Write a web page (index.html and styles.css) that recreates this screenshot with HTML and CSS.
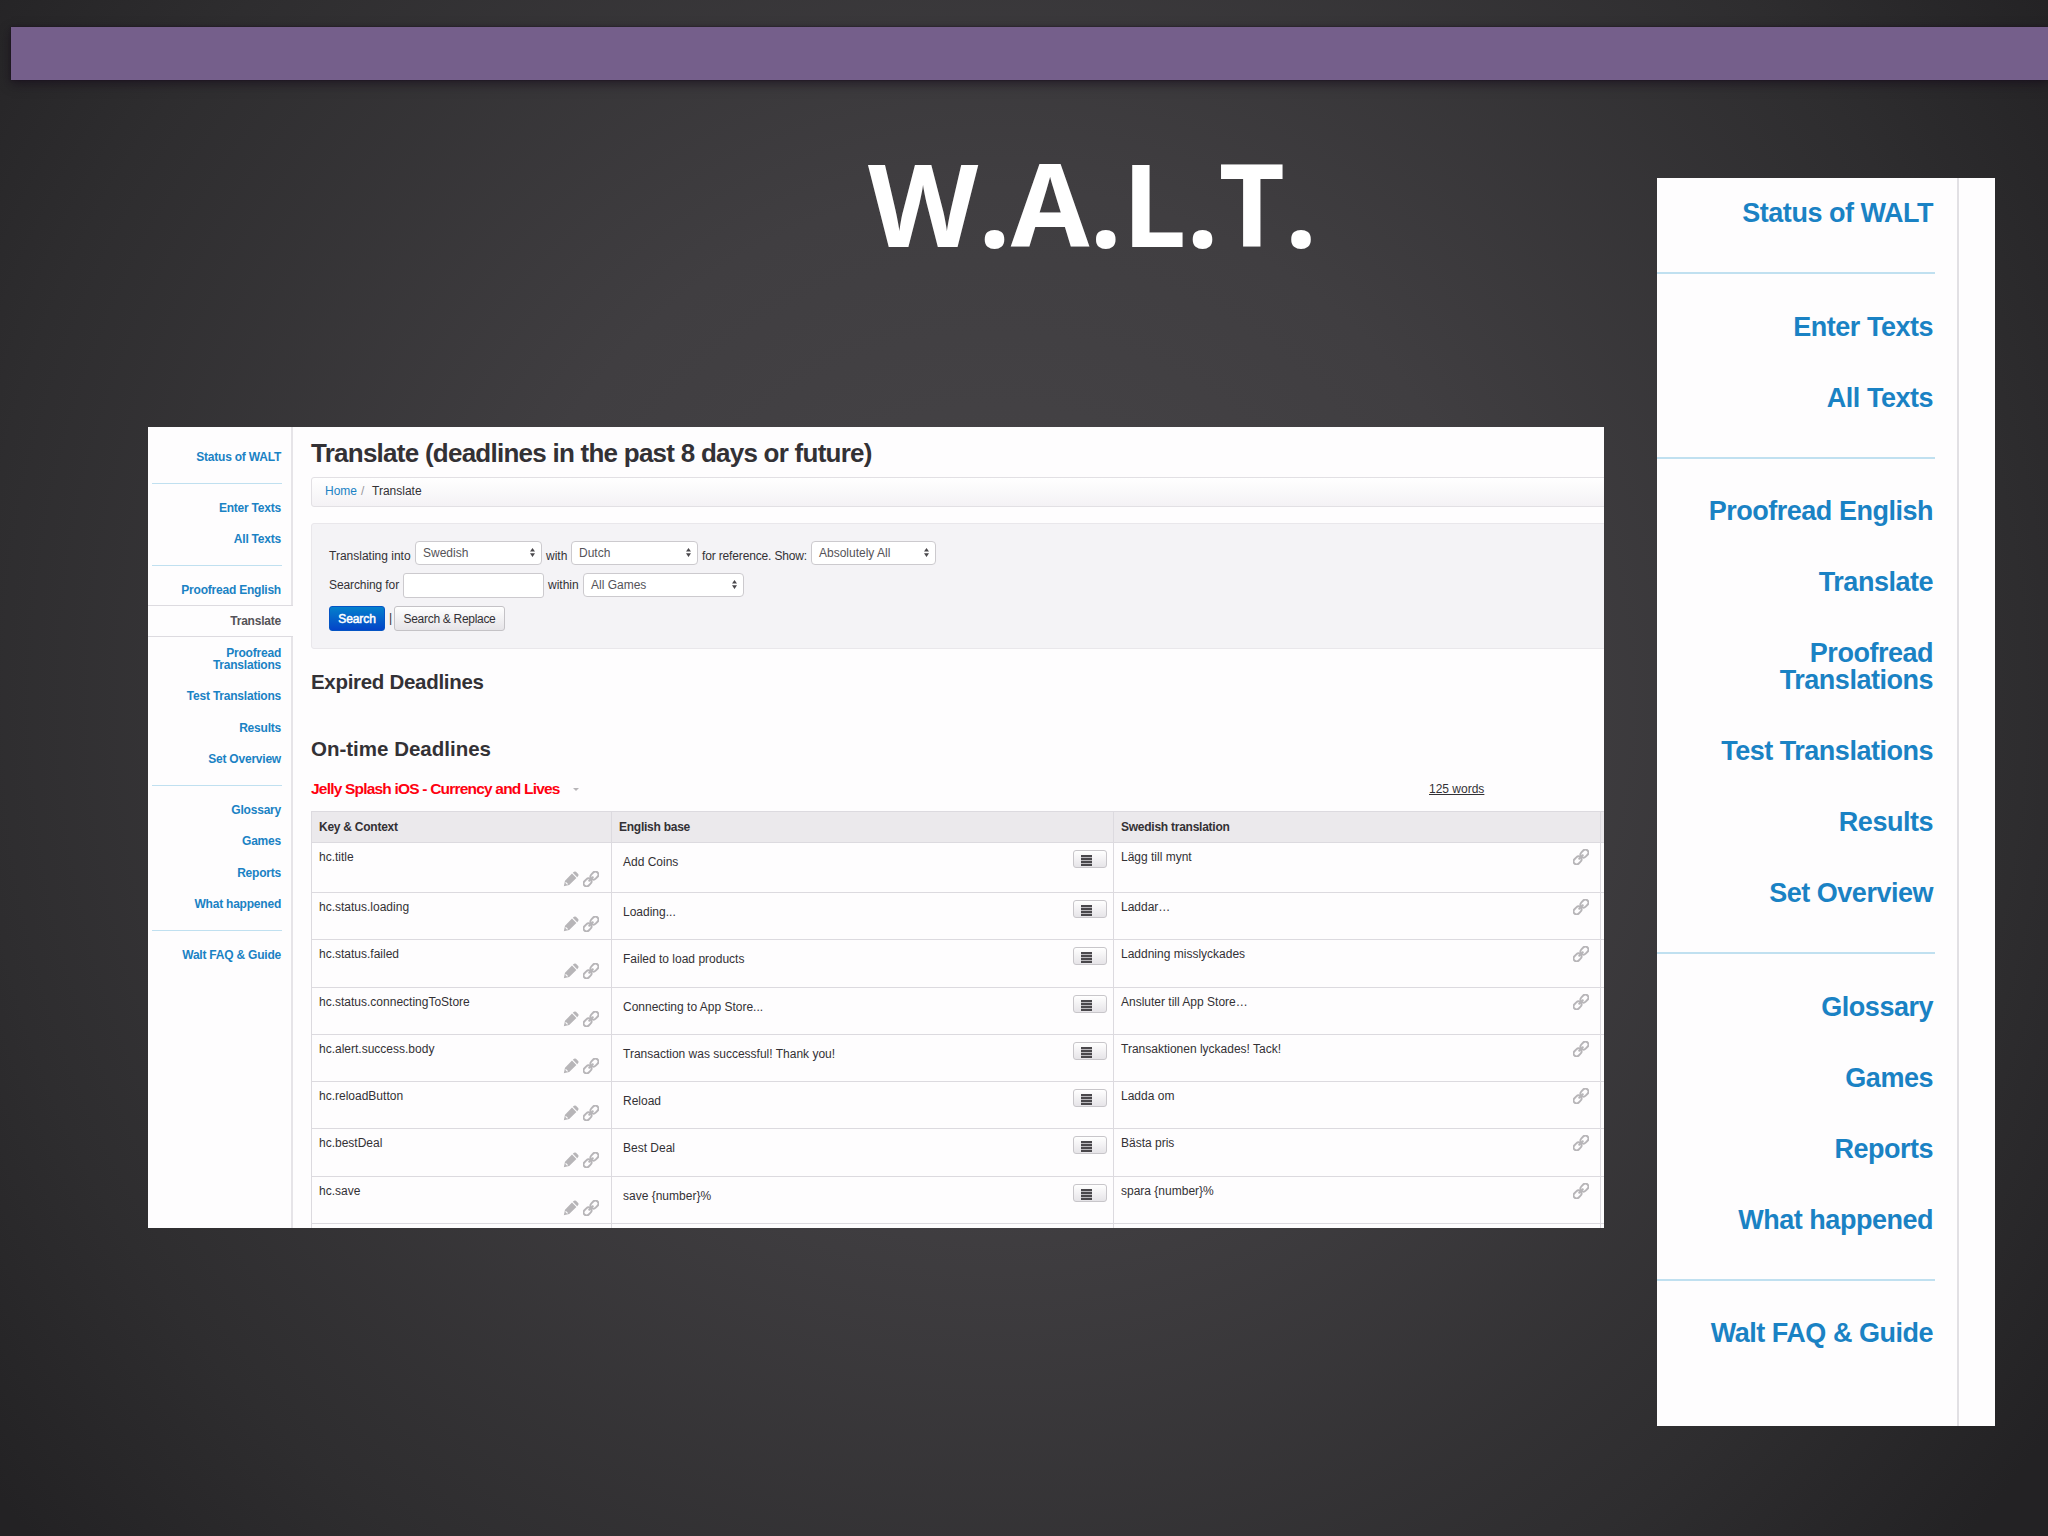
FILE: index.html
```html
<!DOCTYPE html>
<html lang="en">
<head>
    <meta charset="UTF-8">
    <title>W.A.L.T.</title>
    <link rel="stylesheet" href="styles.css">
</head>
<body>

<svg class="symbols" width="0" height="0">
    <symbol id="pencil" viewBox="0 0 16 16">
        <path d="M.8 15.2 L2 9.8 L9 2.6 L13.4 7 L6.2 14 Z M9.8 1.8 L11 .8 Q12 0 13 .8 L15.2 3 Q16 4 15.2 5 L14.2 6.2 Z" fill="#b7b5b8"/>
        <path d="M2.6 11.4 L4.6 13.4" stroke="#fff" stroke-width="1.1"/>
    </symbol>
    <symbol id="link" viewBox="0 0 16 16">
        <g fill="none" stroke="#b7b5b8" stroke-width="1.9" transform="rotate(-45 8 8)">
            <rect x="-1.2" y="5" width="8.6" height="6" rx="3"/>
            <rect x="8.6" y="5" width="8.6" height="6" rx="3"/>
            <path d="M4.6 8 H11.4"/>
        </g>
    </symbol>
    <symbol id="arrows" viewBox="0 0 6 11">
        <path d="M0 4.4 L3 0 L6 4.4 Z M0 6.4 L3 10.8 L6 6.4 Z" fill="#4a484c"/>
    </symbol>
</svg>

<div class="bar"></div>

<div class="slide">
    <div class="main">
        <h1 class="title">W.A.L.T.</h1>

        <div class="app">
            <nav class="menu">
                <a>Status of WALT</a>
                <hr>
                <a>Enter Texts</a>
                <a>All Texts</a>
                <hr>
                <a>Proofread English</a>
                <a class="active">Translate</a>
                <a>Proofread<br>Translations</a>
                <a>Test Translations</a>
                <a>Results</a>
                <a>Set Overview</a>
                <hr>
                <a>Glossary</a>
                <a>Games</a>
                <a>Reports</a>
                <a>What happened</a>
                <hr>
                <a>Walt FAQ &amp; Guide</a>
            </nav>

            <div class="page">
                <h2>Translate (deadlines in the past 8 days or future)</h2>

                <div class="breadcrumb"><a>Home</a><i>/</i><span>Translate</span></div>

                <div class="well">
                    <div class="row first">
                        <span class="label into">Translating into</span>
                        <div class="select">Swedish<svg><use href="#arrows"/></svg></div>
                        <span class="label with">with</span>
                        <div class="select">Dutch<svg><use href="#arrows"/></svg></div>
                        <span class="label show">for reference. Show:</span>
                        <div class="select narrow">Absolutely All<svg><use href="#arrows"/></svg></div>
                    </div>
                    <div class="row second">
                        <span class="label for">Searching for</span>
                        <input type="text">
                        <span class="label within">within</span>
                        <div class="select wide">All Games<svg><use href="#arrows"/></svg></div>
                    </div>
                    <div class="row third">
                        <button class="primary">Search</button>
                        <span class="label pipe">|</span>
                        <button>Search &amp; Replace</button>
                    </div>
                </div>

                <h3 class="expired">Expired Deadlines</h3>
                <h3 class="ontime">On-time Deadlines</h3>

                <div class="set">
                    <h4>Jelly Splash iOS - Currency and Lives</h4>
                    <b class="caret"></b>
                    <a class="words">125 words</a>
                </div>

                <table>
                    <thead>
                    <tr>
                        <th class="key">Key &amp; Context</th>
                        <th class="base">English base</th>
                        <th class="translation">Swedish translation</th>
                        <th class="more"></th>
                    </tr>
                    </thead>
                    <tbody>
                    <tr>
                        <td><div class="cell"><span>hc.title</span><div class="tools"><svg><use href="#pencil"/></svg><svg><use href="#link"/></svg></div></div></td>
                        <td><div class="cell english"><span>Add Coins</span><div class="lines"><i></i></div></div></td>
                        <td><div class="cell"><span>Lägg till mynt</span><svg class="chain"><use href="#link"/></svg></div></td>
                        <td></td>
                    </tr>
                    <tr>
                        <td><div class="cell"><span>hc.status.loading</span><div class="tools"><svg><use href="#pencil"/></svg><svg><use href="#link"/></svg></div></div></td>
                        <td><div class="cell english"><span>Loading...</span><div class="lines"><i></i></div></div></td>
                        <td><div class="cell"><span>Laddar…</span><svg class="chain"><use href="#link"/></svg></div></td>
                        <td></td>
                    </tr>
                    <tr>
                        <td><div class="cell"><span>hc.status.failed</span><div class="tools"><svg><use href="#pencil"/></svg><svg><use href="#link"/></svg></div></div></td>
                        <td><div class="cell english"><span>Failed to load products</span><div class="lines"><i></i></div></div></td>
                        <td><div class="cell"><span>Laddning misslyckades</span><svg class="chain"><use href="#link"/></svg></div></td>
                        <td></td>
                    </tr>
                    <tr>
                        <td><div class="cell"><span>hc.status.connectingToStore</span><div class="tools"><svg><use href="#pencil"/></svg><svg><use href="#link"/></svg></div></div></td>
                        <td><div class="cell english"><span>Connecting to App Store...</span><div class="lines"><i></i></div></div></td>
                        <td><div class="cell"><span>Ansluter till App Store…</span><svg class="chain"><use href="#link"/></svg></div></td>
                        <td></td>
                    </tr>
                    <tr>
                        <td><div class="cell"><span>hc.alert.success.body</span><div class="tools"><svg><use href="#pencil"/></svg><svg><use href="#link"/></svg></div></div></td>
                        <td><div class="cell english"><span>Transaction was successful! Thank you!</span><div class="lines"><i></i></div></div></td>
                        <td><div class="cell"><span>Transaktionen lyckades! Tack!</span><svg class="chain"><use href="#link"/></svg></div></td>
                        <td></td>
                    </tr>
                    <tr>
                        <td><div class="cell"><span>hc.reloadButton</span><div class="tools"><svg><use href="#pencil"/></svg><svg><use href="#link"/></svg></div></div></td>
                        <td><div class="cell english"><span>Reload</span><div class="lines"><i></i></div></div></td>
                        <td><div class="cell"><span>Ladda om</span><svg class="chain"><use href="#link"/></svg></div></td>
                        <td></td>
                    </tr>
                    <tr>
                        <td><div class="cell"><span>hc.bestDeal</span><div class="tools"><svg><use href="#pencil"/></svg><svg><use href="#link"/></svg></div></div></td>
                        <td><div class="cell english"><span>Best Deal</span><div class="lines"><i></i></div></div></td>
                        <td><div class="cell"><span>Bästa pris</span><svg class="chain"><use href="#link"/></svg></div></td>
                        <td></td>
                    </tr>
                    <tr>
                        <td><div class="cell"><span>hc.save</span><div class="tools"><svg><use href="#pencil"/></svg><svg><use href="#link"/></svg></div></div></td>
                        <td><div class="cell english"><span>save {number}%</span><div class="lines"><i></i></div></div></td>
                        <td><div class="cell"><span>spara {number}%</span><svg class="chain"><use href="#link"/></svg></div></td>
                        <td></td>
                    </tr>
                    <tr>
                        <td></td>
                        <td></td>
                        <td></td>
                        <td></td>
                    </tr>
                    </tbody>
                </table>
            </div>
        </div>
    </div>

    <nav class="menu large">
        <a>Status of WALT</a>
        <hr>
        <a>Enter Texts</a>
        <a>All Texts</a>
        <hr>
        <a>Proofread English</a>
        <a>Translate</a>
        <a>Proofread<br>Translations</a>
        <a>Test Translations</a>
        <a>Results</a>
        <a>Set Overview</a>
        <hr>
        <a>Glossary</a>
        <a>Games</a>
        <a>Reports</a>
        <a>What happened</a>
        <hr>
        <a>Walt FAQ &amp; Guide</a>
    </nav>
</div>

</body>
</html>
```

FILE: styles.css
```css
body
{
    margin: 0;
    width: 2048px;
    height: 1536px;
    overflow: hidden;
    background: radial-gradient(circle 1280px at 1000px 700px, #474548 0%, #403e41 40%, #2e2d2f 80%, #232224 100%);
    font-family: "Liberation Sans", Arial, sans-serif;
    color: #333135;
}

.symbols
{
    display: block;
}

.bar
{
    height: 53px;
    margin: 27px 0 0 11px;
    background: #755f8b;
    box-shadow: 0 4px 10px rgba(20, 10, 25, 0.6), 0 0 2px #1c1422;
}

.slide
{
    display: flex;
    gap: 53px;
    padding-left: 148px;
}

.main
{
    width: 1456px;
}

.title
{
    height: 347px;
    margin: 0 0 0 720px;
    padding-top: 45px;
    box-sizing: border-box;
    color: #fff;
    font: bold 114px/155px "Open Sans", sans-serif;
}

.app
{
    display: flex;
    height: 801px;
    overflow: hidden;
    background: #fefdfe;
}

/* side menu, sized in em so that both copies share it */

.menu
{
    display: flex;
    flex-direction: column;
    flex: none;
    box-sizing: border-box;
    width: 145px;
    padding-top: 14.5px;
    border-right: 2px solid #e6e4e8;
    background: #fefdfe;
    font-size: 12px;
    font-weight: bold;
    line-height: 1em;
    text-align: right;
    letter-spacing: -0.018em;
}

.menu a
{
    padding: 0.8125em 10px 0.8125em 0;
    color: #1a82c4;
}

.menu .active
{
    margin-right: -2px;
    padding: 8.75px 12px;
    border: solid #dddbe0;
    border-width: 1px 0;
    background: #fefdfe;
    color: #555358;
}

.menu hr
{
    width: 130px;
    margin: 10.2px 9px 7.8px auto;
    border: 0;
    border-top: 1px solid #c0e0f0;
}

.menu.large
{
    width: 338px;
    height: 1248px;
    margin-top: 98px;
    padding: 0 52px 0 0;
    border: 0;
    background: linear-gradient(#e2e0e4, #e2e0e4) 300px 0 / 2px 100% no-repeat #fefdfe;
    font-size: 27px;
}

.menu.large a
{
    padding: 22px 10px;
}

.menu.large hr
{
    width: 278px;
    margin: 23px 8px 17.5px 0;
    border-top-width: 2px;
}

/* page */

.page
{
    flex: none;
    width: 1330px;
    padding-left: 18px;
    font-size: 12px;
}

h2, h3, h4
{
    margin: 0;
    white-space: nowrap;
}

h2
{
    height: 50px;
    font-size: 26px;
    line-height: 52px;
    letter-spacing: -0.75px;
}

.breadcrumb
{
    display: flex;
    box-sizing: border-box;
    height: 30px;
    padding-left: 13px;
    border: 1px solid #e2e0e4;
    border-radius: 3px;
    background: linear-gradient(#fff, #f4f2f5);
    line-height: 27px;
}

.breadcrumb a
{
    color: #1a82c4;
}

.breadcrumb i
{
    width: 11px;
    padding-left: 4px;
    color: #99979b;
    font-style: normal;
}

.well
{
    box-sizing: border-box;
    height: 126px;
    margin-top: 16px;
    padding: 17px 17px 0;
    border: 1px solid #e9e7eb;
    border-radius: 3px;
    background: #f4f3f6;
}

.row
{
    display: flex;
    height: 24px;
    line-height: 24px;
}

.second
{
    margin-top: 8px;
}

.third
{
    margin-top: 9px;
}

.label
{
    margin-right: 4px;
    white-space: nowrap;
}

.first .label
{
    padding-top: 3px;
}

.into
{
    width: 82px;
}

.with
{
    width: 21px;
}

.show
{
    width: 105px;
    letter-spacing: -0.15px;
}

.for
{
    width: 70px;
    letter-spacing: -0.1px;
}

.within
{
    width: 31px;
}

.pipe
{
    width: 1px;
}

.select
{
    display: flex;
    align-items: center;
    justify-content: space-between;
    box-sizing: border-box;
    width: 127px;
    height: 24px;
    margin-right: 4px;
    padding: 0 6px 1px 7px;
    border: 1px solid #cccace;
    border-radius: 4px;
    background: #fff;
    color: #555358;
}

.select svg
{
    width: 5px;
    height: 11px;
}

.narrow
{
    width: 125px;
}

.wide
{
    width: 161px;
}

input
{
    box-sizing: border-box;
    width: 141px;
    height: 25px;
    margin: 0 4px 0 0;
    border: 1px solid #cccace;
    border-radius: 3px;
    background: #fff;
}

button
{
    box-sizing: border-box;
    width: 111px;
    height: 25px;
    padding: 0;
    border: 1px solid #c4c2c6;
    border-radius: 3px;
    background: linear-gradient(#fff, #e6e4e8);
    color: #333135;
    font: 12px "Liberation Sans", Arial, sans-serif;
    letter-spacing: -0.3px;
    white-space: nowrap;
}

.primary
{
    width: 56px;
    margin-right: 4px;
    border-color: #0454c4;
    background: linear-gradient(#0480cc, #0444c8);
    color: #fff;
    letter-spacing: -0.1px;
    -webkit-text-stroke: 0.5px #fff;
}

h3
{
    font-size: 20.5px;
    line-height: 24px;
}

.expired
{
    margin-top: 21px;
    letter-spacing: -0.3px;
}

.ontime
{
    margin-top: 43px;
}

.set
{
    display: flex;
    align-items: center;
    box-sizing: border-box;
    height: 50px;
    padding-top: 6px;
}

h4
{
    width: 262px;
    color: #ff0010;
    font-size: 15.5px;
    letter-spacing: -0.8px;
}

.caret
{
    border: solid transparent;
    border-width: 3px 3px 0;
    border-top-color: #b7b5b8;
}

.words
{
    margin-left: 850px;
    text-decoration: underline;
}

table
{
    width: 1320px;
    table-layout: fixed;
    border-spacing: 0;
    border-top: 1px solid #dcdadf;
}

th, td
{
    border-left: 1px solid #dcdadf;
    border-bottom: 1px solid #dcdadf;
    text-align: left;
    vertical-align: top;
}

th
{
    height: 30px;
    padding: 0 7px;
    background: #ebe9ec;
    letter-spacing: -0.25px;
    vertical-align: middle;
}

.key
{
    width: 285px;
}

.base
{
    width: 487px;
}

.translation
{
    width: 472px;
}

td
{
    height: 46.3px;
    padding: 0;
}

tbody tr:first-child td
{
    height: 49px;
}

.cell
{
    display: flex;
    justify-content: space-between;
    padding: 7px 7px 0 7px;
    line-height: 15px;
}

.tools
{
    display: flex;
    gap: 4px;
    margin-right: 5px;
    padding-top: 16px;
}

tr:first-child .tools
{
    padding-top: 21px;
}

.tools svg, .chain
{
    width: 16px;
    height: 16px;
}

.chain
{
    margin: -1px 4px 0 0;
}

.english
{
    padding-left: 11px;
    padding-right: 6px;
}

.english span
{
    padding-top: 5px;
}

.lines
{
    box-sizing: border-box;
    width: 34px;
    height: 18px;
    padding: 4px 0 0 7px;
    border: 1px solid #c8c6ca;
    border-radius: 3px;
    background: linear-gradient(#fff, #e6e4e8);
}

.lines i
{
    display: block;
    width: 11px;
    height: 11px;
    background: repeating-linear-gradient(#4a484c 0 2px, #bbb9bd 2px 3px);
}
```
